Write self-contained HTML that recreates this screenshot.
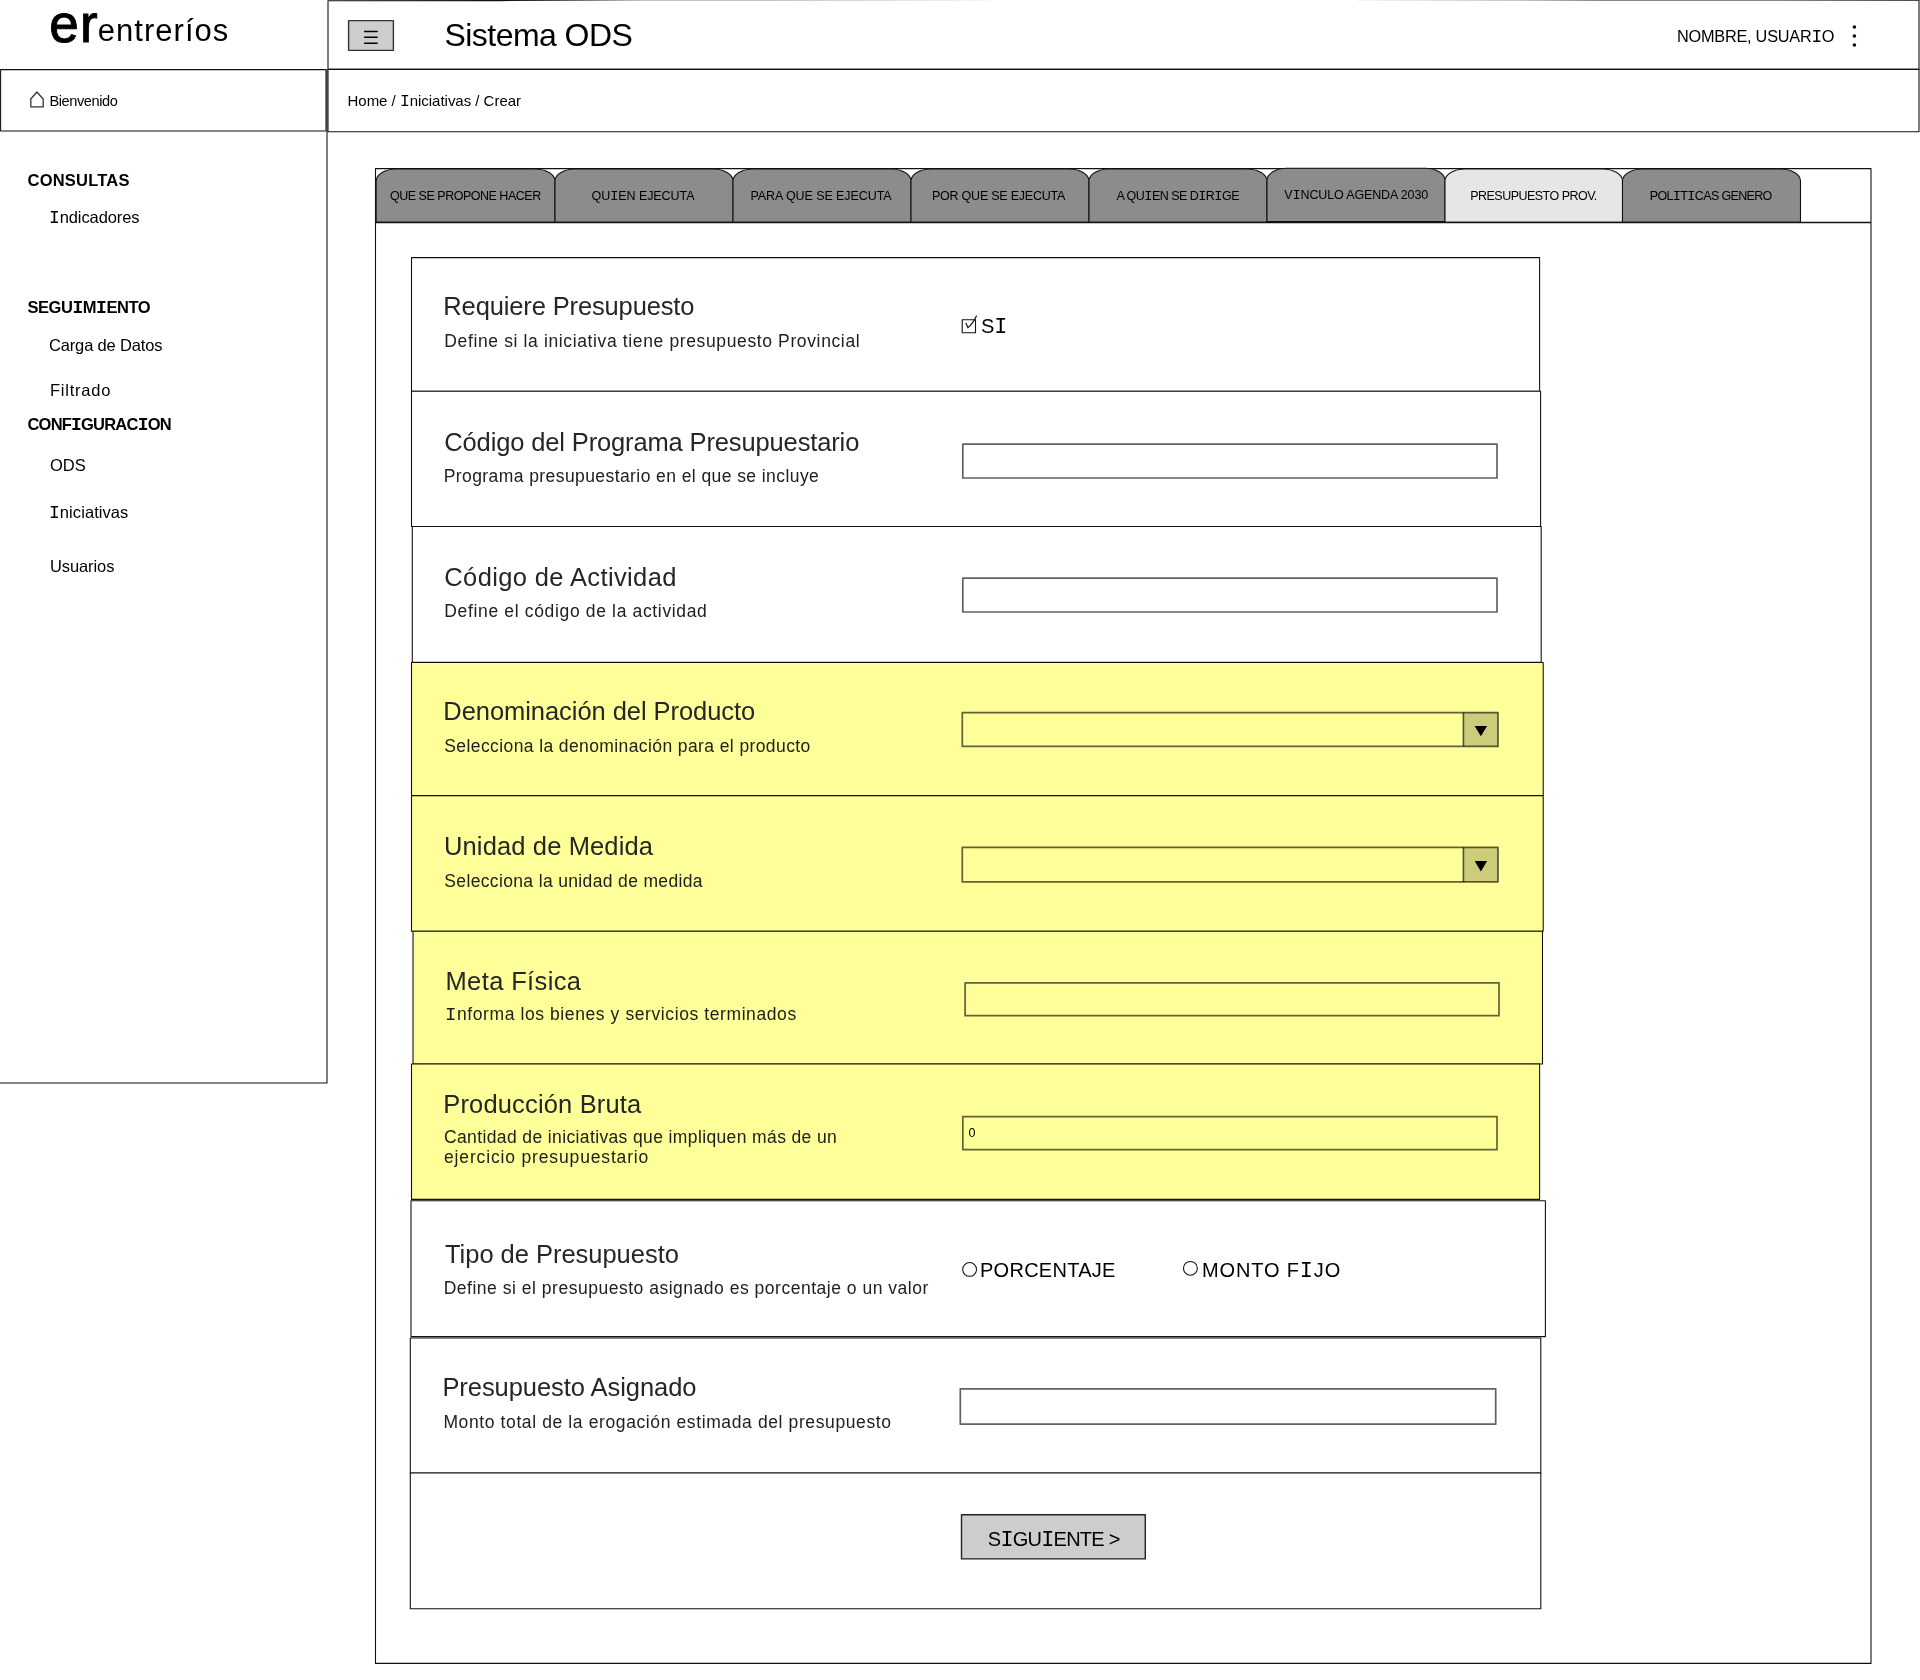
<!DOCTYPE html>
<html lang="es">
<head>
<meta charset="utf-8">
<title>Sistema ODS - Iniciativas - Crear</title>
<style>
html,body{margin:0;padding:0;background:#fff;}
body{width:1920px;height:1680px;position:relative;overflow:hidden;font-family:"Liberation Sans",sans-serif;color:#000;}
svg.bg{position:absolute;left:0;top:0;width:1920px;height:1680px;}
.t{position:absolute;white-space:pre;color:#000;}
b.i{font-family:"Liberation Mono",monospace;font-weight:inherit;font-size:1.09em;line-height:0;}
</style>
</head>
<body>
<svg class="bg" viewBox="0 0 1920 1680" width="1920" height="1680">
<path d="M327 69.5 L327 1083 L-2 1083" fill="none" stroke="#111" stroke-width="1.08"/>
<path d="M0.6 69.6 L326 69.6 L326 131 L0.6 131 Z" fill="#fff" stroke="#111" stroke-width="1.08" stroke-linejoin="round"/>
<path d="M328 69.4 L328 0.8 L500 0.6 L640 -0.2 L1300 -0.6 L1600 -0.1 L1919 0.2 L1919 69.4 Z" fill="#fff" stroke="#111" stroke-width="1.08"/>
<path d="M328 69.4 L1919 69.4 L1919 131.7 L328 131.7 Z" fill="#fff" stroke="#111" stroke-width="1.08" stroke-linejoin="round"/>
<path d="M348.6 20.6 L393.4 20.6 L393.4 50.4 L348.6 50.4 Z" fill="#cdcdcd" stroke="#333" stroke-width="1.4" stroke-linejoin="round"/>
<path d="M364.6 31.5 L377.1 31.5" stroke="#000" stroke-width="1.5" stroke-linecap="round"/>
<path d="M364.6 37.3 L377.1 37.3" stroke="#000" stroke-width="1.5" stroke-linecap="round"/>
<path d="M364.6 43.2 L377.1 43.2" stroke="#000" stroke-width="1.5" stroke-linecap="round"/>
<circle cx="1854.4" cy="27" r="1.8" fill="#000"/>
<circle cx="1854.4" cy="36" r="1.8" fill="#000"/>
<circle cx="1854.4" cy="45" r="1.8" fill="#000"/>
<path d="M30.8 106.9 L30.8 99 L36.9 92 L43.2 99 L43.2 106.9 Z" fill="none" stroke="#333" stroke-width="1.3" stroke-linejoin="round"/>
<path d="M375.5 168.6 L1871 168.6 L1871 1663.4 L375.5 1663.4 Z" fill="#fff" stroke="#111" stroke-width="1.08" stroke-linejoin="round"/>
<path d="M376.2 222.3 L376.2 181 C376.2 174.40 385.20 169 396.2 169 L535 169 C546.00 169 555 174.40 555 181 L555 222.3 Z" fill="#8c8c8c" stroke="#111" stroke-width="1.08"/>
<path d="M555 222.3 L555 181 C555 174.40 564.00 169 575 169 L713 169 C724.00 169 733 174.40 733 181 L733 222.3 Z" fill="#8c8c8c" stroke="#111" stroke-width="1.08"/>
<path d="M733 222.3 L733 181 C733 174.40 742.00 169 753 169 L891 169 C902.00 169 911 174.40 911 181 L911 222.3 Z" fill="#8c8c8c" stroke="#111" stroke-width="1.08"/>
<path d="M911 222.3 L911 181 C911 174.40 920.00 169 931 169 L1069 169 C1080.00 169 1089 174.40 1089 181 L1089 222.3 Z" fill="#8c8c8c" stroke="#111" stroke-width="1.08"/>
<path d="M1089 222.3 L1089 181 C1089 174.40 1098.00 169 1109 169 L1247 169 C1258.00 169 1267 174.40 1267 181 L1267 222.3 Z" fill="#8c8c8c" stroke="#111" stroke-width="1.08"/>
<path d="M1267 221.6 L1267 180.3 C1267 173.70 1276.00 168.3 1287 168.3 L1425 168.3 C1436.00 168.3 1445 173.70 1445 180.3 L1445 221.6 Z" fill="#8c8c8c" stroke="#111" stroke-width="1.08"/>
<path d="M1445 222.3 L1445 181 C1445 174.40 1454.00 169 1465 169 L1602.5 169 C1613.50 169 1622.5 174.40 1622.5 181 L1622.5 222.3 Z" fill="#e6e6e6" stroke="#111" stroke-width="1.08"/>
<path d="M1622.5 222.3 L1622.5 181 C1622.5 174.40 1631.50 169 1642.5 169 L1780.5 169 C1791.50 169 1800.5 174.40 1800.5 181 L1800.5 222.3 Z" fill="#8c8c8c" stroke="#111" stroke-width="1.08"/>
<path d="M375.5 222.5 L1871 222.5" stroke="#111" stroke-width="1.5"/>
<path d="M411.5 257.6 L1539.6 257.6 L1539.6 391.25 L411.5 391.25 Z" fill="#fff" stroke="#111" stroke-width="1.08" stroke-linejoin="round"/>
<path d="M411.5 391.25 L1540.6 391.25 L1540.6 526.5 L411.5 526.5 Z" fill="#fff" stroke="#111" stroke-width="1.08" stroke-linejoin="round"/>
<path d="M412.3 526.5 L1541.2 526.5 L1541.2 662.3 L412.3 662.3 Z" fill="#fff" stroke="#111" stroke-width="1.08" stroke-linejoin="round"/>
<path d="M411.5 662.5 L1543.2 662.5 L1543.2 795.6 L411.5 795.6 Z" fill="#ffff99" stroke="#111" stroke-width="1.08" stroke-linejoin="round"/>
<path d="M411.5 795.6 L1543.2 795.6 L1543.2 931.25 L411.5 931.25 Z" fill="#ffff99" stroke="#111" stroke-width="1.08" stroke-linejoin="round"/>
<path d="M413 931.25 L1542.5 931.25 L1542.5 1064 L413 1064 Z" fill="#ffff99" stroke="#111" stroke-width="1.08" stroke-linejoin="round"/>
<path d="M411.5 1064 L1539.6 1064 L1539.6 1199.4 L411.5 1199.4 Z" fill="#ffff99" stroke="#111" stroke-width="1.08" stroke-linejoin="round"/>
<path d="M411 1200.8 L1545.4 1200.8 L1545.4 1336.6 L411 1336.6 Z" fill="#fff" stroke="#111" stroke-width="1.08" stroke-linejoin="round"/>
<path d="M410.3 1338 L1540.8 1338 L1540.8 1473 L410.3 1473 Z" fill="#fff" stroke="#111" stroke-width="1.08" stroke-linejoin="round"/>
<path d="M410.3 1473 L1540.8 1473 L1540.8 1608.7 L410.3 1608.7 Z" fill="#fff" stroke="#111" stroke-width="1.08" stroke-linejoin="round"/>
<path d="M1463.4 712.6 L1498 712.6 L1498 746.4 L1463.4 746.4 Z" fill="#cccc7a"/>
<path d="M1463.4 712.6 L1463.4 746.4" stroke="rgba(0,0,0,0.62)" stroke-width="1.7"/>
<path d="M1474.7 725.95 L1487.1 725.95 L1480.9 736.35 Z" fill="#000"/>
<path d="M1463.4 847.4 L1498 847.4 L1498 881.8 L1463.4 881.8 Z" fill="#cccc7a"/>
<path d="M1463.4 847.4 L1463.4 881.8" stroke="rgba(0,0,0,0.62)" stroke-width="1.7"/>
<path d="M1474.7 861.05 L1487.1 861.05 L1480.9 871.45 Z" fill="#000"/>
<path d="M962.8 444.1 L1497 444.1 L1497 478 L962.8 478 Z" fill="none" stroke="rgba(0,0,0,0.62)" stroke-width="1.7" stroke-linejoin="round"/>
<path d="M962.8 578.2 L1497 578.2 L1497 612 L962.8 612 Z" fill="none" stroke="rgba(0,0,0,0.62)" stroke-width="1.7" stroke-linejoin="round"/>
<path d="M962.3 712.6 L1498 712.6 L1498 746.4 L962.3 746.4 Z" fill="none" stroke="rgba(0,0,0,0.62)" stroke-width="1.7" stroke-linejoin="round"/>
<path d="M962.3 847.4 L1498 847.4 L1498 881.8 L962.3 881.8 Z" fill="none" stroke="rgba(0,0,0,0.62)" stroke-width="1.7" stroke-linejoin="round"/>
<path d="M965.1 982.8 L1499 982.8 L1499 1015.7 L965.1 1015.7 Z" fill="none" stroke="rgba(0,0,0,0.62)" stroke-width="1.7" stroke-linejoin="round"/>
<path d="M962.8 1116.6 L1497 1116.6 L1497 1149.7 L962.8 1149.7 Z" fill="none" stroke="rgba(0,0,0,0.62)" stroke-width="1.7" stroke-linejoin="round"/>
<path d="M960.3 1388.8 L1495.7 1388.8 L1495.7 1424.2 L960.3 1424.2 Z" fill="none" stroke="rgba(0,0,0,0.62)" stroke-width="1.7" stroke-linejoin="round"/>
<path d="M961.5 1514.8 L1145.3 1514.8 L1145.3 1558.9 L961.5 1558.9 Z" fill="#cdcdcd" stroke="#222" stroke-width="1.4" stroke-linejoin="round"/>
<path d="M962.2 319.8 L975.5 319.8 L975.5 332.8 L962.2 332.8 Z" fill="none" stroke="#111" stroke-width="1.1" stroke-linejoin="round"/>
<path d="M966 323.3 Q967.2 326 968 327.7 Q973 323.5 976.4 316" fill="none" stroke="#000" stroke-width="1.1" stroke-linecap="round"/>
<circle cx="969.6" cy="1269.4" r="6.9" fill="#fff" stroke="#111" stroke-width="1.05"/>
<circle cx="1190.4" cy="1268.3" r="6.9" fill="#fff" stroke="#111" stroke-width="1.05"/>
</svg>
<div id="texts" style="will-change:transform;">
<div class="logo">
<span class="t" style="left:49.25px;top:-3.49px;font-size:53px;line-height:53px;letter-spacing:1.250px;-webkit-text-stroke:1px #000;">er</span>
<span class="t" style="left:97.75px;top:15.00px;font-size:31px;line-height:31px;letter-spacing:1.031px;">entreríos</span>
</div>
<div class="welcome">
<span class="t" style="left:49.40px;top:94.00px;font-size:14.6px;line-height:14.6px;letter-spacing:-0.411px;">Bienvenido</span>
</div>
<header class="topbar">
<span class="t" style="left:444.50px;top:19.00px;font-size:32px;line-height:32px;letter-spacing:-0.550px;">Sistema ODS</span>
</header>
<nav class="breadcrumb">
<span class="t" style="left:347.50px;top:93.00px;font-size:15px;line-height:15px;letter-spacing:-0.020px;">Home / <b class="i">I</b>niciativas / Crear</span>
</nav>
<div class="user">
<span class="t" style="left:1677.00px;top:28.00px;font-size:16.3px;line-height:16.3px;letter-spacing:-0.236px;">NOMBRE, USUAR<b class="i">I</b>O</span>
</div>
<aside class="sidebar">
<span class="t" style="left:27.60px;top:172.00px;font-size:16.5px;line-height:16.5px;letter-spacing:0.200px;font-weight:bold;">CONSULTAS</span>
<span class="t" style="left:49.00px;top:209.00px;font-size:16.5px;line-height:16.5px;letter-spacing:-0.100px;"><b class="i">I</b>ndicadores</span>
<span class="t" style="left:27.50px;top:299.00px;font-size:16.5px;line-height:16.5px;letter-spacing:-0.450px;font-weight:bold;">SEGU<b class="i">I</b>M<b class="i">I</b>ENTO</span>
<span class="t" style="left:49.00px;top:337.00px;font-size:16.5px;line-height:16.5px;letter-spacing:-0.154px;">Carga de Datos</span>
<span class="t" style="left:50.00px;top:382.00px;font-size:16.5px;line-height:16.5px;letter-spacing:0.771px;">Filtrado</span>
<span class="t" style="left:27.50px;top:416.00px;font-size:16.5px;line-height:16.5px;letter-spacing:-0.792px;font-weight:bold;">CONF<b class="i">I</b>GURAC<b class="i">I</b>ON</span>
<span class="t" style="left:50.00px;top:457.00px;font-size:16.5px;line-height:16.5px;letter-spacing:0.000px;">ODS</span>
<span class="t" style="left:49.00px;top:504.00px;font-size:16.5px;line-height:16.5px;letter-spacing:0.070px;"><b class="i">I</b>niciativas</span>
<span class="t" style="left:50.00px;top:558.00px;font-size:16.5px;line-height:16.5px;letter-spacing:-0.100px;">Usuarios</span>
</aside>
<nav class="tabs">
<span class="t" style="left:390.00px;top:190.00px;font-size:12.5px;line-height:12.5px;letter-spacing:-0.489px;">QUE SE PROPONE HACER</span>
<span class="t" style="left:591.60px;top:190.00px;font-size:12.5px;line-height:12.5px;letter-spacing:-0.075px;">QU<b class="i">I</b>EN EJECUTA</span>
<span class="t" style="left:750.50px;top:190.00px;font-size:12.5px;line-height:12.5px;letter-spacing:-0.083px;">PARA QUE SE EJECUTA</span>
<span class="t" style="left:932.00px;top:190.00px;font-size:12.5px;line-height:12.5px;letter-spacing:-0.235px;">POR QUE SE EJECUTA</span>
<span class="t" style="left:1116.50px;top:190.00px;font-size:12.5px;line-height:12.5px;letter-spacing:-0.531px;">A QU<b class="i">I</b>EN SE D<b class="i">I</b>R<b class="i">I</b>GE</span>
<span class="t" style="left:1284.30px;top:189.00px;font-size:12.5px;line-height:12.5px;letter-spacing:-0.144px;">V<b class="i">I</b>NCULO AGENDA 2030</span>
<span class="t" style="left:1470.20px;top:190.00px;font-size:12.5px;line-height:12.5px;letter-spacing:-0.519px;">PRESUPUESTO PROV.</span>
<span class="t" style="left:1649.80px;top:190.00px;font-size:12.5px;line-height:12.5px;letter-spacing:-0.660px;">POL<b class="i">I</b>T<b class="i">I</b>CAS GENERO</span>
</nav>
<main class="form">
<span class="t" style="left:443.30px;top:294.00px;font-size:25.5px;line-height:25.5px;letter-spacing:-0.134px;color:#262626;">Requiere Presupuesto</span>
<span class="t" style="left:444.30px;top:333.00px;font-size:17.5px;line-height:17.5px;letter-spacing:0.629px;color:#202020;">Define si la iniciativa tiene presupuesto Provincial</span>
<span class="t" style="left:981.00px;top:316.00px;font-size:20px;line-height:20px;letter-spacing:0.000px;">S<b class="i">I</b></span>
<span class="t" style="left:444.30px;top:430.00px;font-size:25.5px;line-height:25.5px;letter-spacing:-0.138px;color:#262626;">Código del Programa Presupuestario</span>
<span class="t" style="left:443.70px;top:468.00px;font-size:17.5px;line-height:17.5px;letter-spacing:0.421px;color:#202020;">Programa presupuestario en el que se incluye</span>
<span class="t" style="left:444.30px;top:565.00px;font-size:25.5px;line-height:25.5px;letter-spacing:0.372px;color:#262626;">Código de Actividad</span>
<span class="t" style="left:444.30px;top:603.00px;font-size:17.5px;line-height:17.5px;letter-spacing:0.655px;color:#202020;">Define el código de la actividad</span>
<span class="t" style="left:443.30px;top:699.00px;font-size:25.5px;line-height:25.5px;letter-spacing:-0.054px;color:#262626;">Denominación del Producto</span>
<span class="t" style="left:444.30px;top:738.00px;font-size:17.5px;line-height:17.5px;letter-spacing:0.398px;color:#202020;">Selecciona la denominación para el producto</span>
<span class="t" style="left:444.00px;top:834.00px;font-size:25.5px;line-height:25.5px;letter-spacing:0.133px;color:#262626;">Unidad de Medida</span>
<span class="t" style="left:444.30px;top:873.00px;font-size:17.5px;line-height:17.5px;letter-spacing:0.352px;color:#202020;">Selecciona la unidad de medida</span>
<span class="t" style="left:445.50px;top:969.00px;font-size:25.5px;line-height:25.5px;letter-spacing:0.375px;color:#262626;">Meta Física</span>
<span class="t" style="left:444.90px;top:1006.00px;font-size:17.5px;line-height:17.5px;letter-spacing:0.593px;color:#202020;"><b class="i">I</b>nforma los bienes y servicios terminados</span>
<span class="t" style="left:443.30px;top:1092.00px;font-size:25.5px;line-height:25.5px;letter-spacing:0.153px;color:#262626;">Producción Bruta</span>
<span class="t" style="left:444.00px;top:1129.00px;font-size:17.5px;line-height:17.5px;letter-spacing:0.376px;color:#202020;">Cantidad de iniciativas que impliquen más de un</span>
<span class="t" style="left:444.00px;top:1149.00px;font-size:17.5px;line-height:17.5px;letter-spacing:0.848px;color:#202020;">ejercicio presupuestario</span>
<span class="t" style="left:968.40px;top:1127.00px;font-size:12.5px;line-height:12.5px;letter-spacing:-0.400px;">0</span>
<span class="t" style="left:445.00px;top:1242.00px;font-size:25.5px;line-height:25.5px;letter-spacing:-0.028px;color:#262626;">Tipo de Presupuesto</span>
<span class="t" style="left:443.70px;top:1280.00px;font-size:17.5px;line-height:17.5px;letter-spacing:0.514px;color:#202020;">Define si el presupuesto asignado es porcentaje o un valor</span>
<span class="t" style="left:980.00px;top:1260.00px;font-size:20px;line-height:20px;letter-spacing:0.267px;">PORCENTAJE</span>
<span class="t" style="left:1202.00px;top:1260.00px;font-size:20px;line-height:20px;letter-spacing:0.856px;">MONTO F<b class="i">I</b>JO</span>
<span class="t" style="left:442.40px;top:1375.00px;font-size:25.5px;line-height:25.5px;letter-spacing:-0.058px;color:#262626;">Presupuesto Asignado</span>
<span class="t" style="left:443.40px;top:1414.00px;font-size:17.5px;line-height:17.5px;letter-spacing:0.612px;color:#202020;">Monto total de la erogación estimada del presupuesto</span>
<span class="t" style="left:987.80px;top:1529.00px;font-size:20px;line-height:20px;letter-spacing:-0.750px;">S<b class="i">I</b>GU<b class="i">I</b>ENTE &gt;</span>
</main>
</div>
</body>
</html>
